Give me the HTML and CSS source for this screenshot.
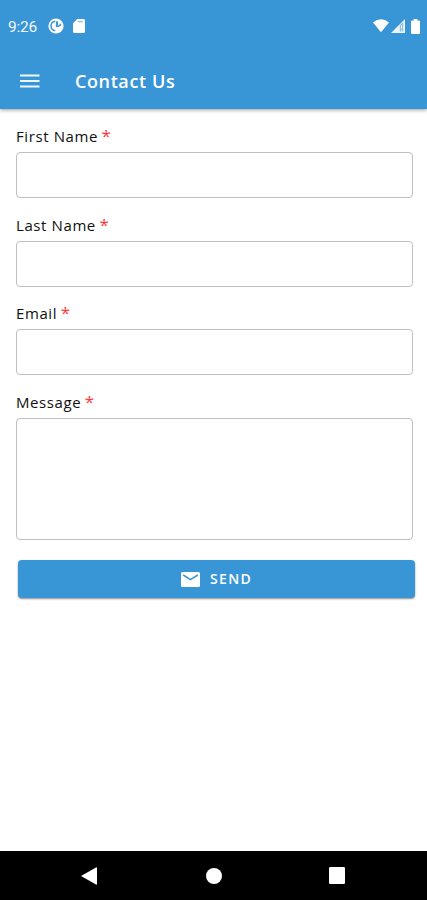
FILE: index.html
```html
<!DOCTYPE html>
<html lang="en">
<head>
<meta charset="utf-8">
<title>Contact Us</title>
<link rel="stylesheet" href="styles.css">
</head>
<body>
<div class="screen">
  <header class="header">
    <div class="status">
      <span class="clock">9:26</span>
      <svg class="app-icon" width="16" height="16" viewBox="0 0 16 16"><circle cx="8" cy="8" r="7.6" fill="#fff"/><path d="M7.2 3.4H6.4Q3 4.6 3 8T6.4 12.6H7.2M8.6 3.4V8.2H10.2Q12.6 8 12.6 5.8" fill="none" stroke="#3895d6" stroke-width="1.5"/><path d="M8.6 3.6H10V7.2H8.6z" fill="#3895d6"/></svg>
      <svg class="card-icon" width="12" height="14" viewBox="0 0 12 14"><path d="M4.2 0H10.5Q12 0 12 1.5V12.5Q12 14 10.5 14H1.5Q0 14 0 12.5V4.2z" fill="#fff"/><path d="M4.8 2.6h5" stroke="#3895d6" stroke-opacity=".6" stroke-width="1.4"/></svg>
      <div class="signals">
        <svg width="16" height="14" viewBox="0 0 16 14"><path d="M8 13.3L0 3.5Q8-3 16 3.5z" fill="#fff"/></svg>
        <svg class="cell" width="14" height="14" viewBox="0 0 14 14"><path d="M14 0V14H0z" fill="#fff" fill-opacity=".9"/><path d="M8.8 6.3L12.2 3V12.4H8.8z" fill="#3895d6" fill-opacity=".55"/><path d="M10.5 6v3.8M10.5 11v1.4" stroke="#fff" stroke-width="1"/></svg>
        <svg class="battery" width="9" height="15" viewBox="0 0 9 15"><path d="M2.7 0h3.6v1.4H8q1 0 1 1V14q0 1-1 1H1q-1 0-1-1V2.4q0-1 1-1h1.7z" fill="#fff"/></svg>
      </div>
    </div>
    <div class="toolbar">
      <svg class="menu" width="20" height="14" viewBox="0 0 20 14"><path d="M0 1.5h19.5M0 7h19.5M0 12.5h19.5" stroke="#fff" stroke-width="2" stroke-opacity=".92"/></svg>
      <h1 class="title">Contact Us</h1>
    </div>
  </header>
  <form class="form">
    <label class="field"><span class="label">First Name <b class="req">*</b></span><input class="box" type="text"></label>
    <label class="field"><span class="label">Last Name <b class="req">*</b></span><input class="box" type="text"></label>
    <label class="field"><span class="label">Email <b class="req">*</b></span><input class="box" type="text"></label>
    <label class="field"><span class="label">Message <b class="req">*</b></span><textarea class="box tall"></textarea></label>
    <button class="send" type="button">
      <svg width="19" height="15" viewBox="0 0 19 15"><rect width="19" height="15" rx="1.6" fill="#fff"/><path d="M2.2 3L9.5 7.6L16.8 3" fill="none" stroke="#3895d6" stroke-width="1.6"/></svg>
      <span>SEND</span>
    </button>
  </form>
  <nav class="nav">
    <svg class="back" width="16" height="18" viewBox="0 0 16 18"><path d="M0 9L15 .5Q16 0 16 1V17Q16 18 15 17.5z" fill="#fff"/></svg>
    <svg class="home" width="16" height="16" viewBox="0 0 16 16"><circle cx="8" cy="8" r="8" fill="#fff"/></svg>
    <svg class="recent" width="16" height="17" viewBox="0 0 16 17"><rect width="16" height="17" rx="1.2" fill="#fff"/></svg>
  </nav>
</div>
</body>
</html>
```
FILE: styles.css
```css
* { box-sizing: border-box; }
body { margin: 0; background: #fff; font-family: "Open Sans", "Noto Sans", sans-serif; }
svg { display: block; flex: none; }
.screen { width: 427px; height: 900px; display: flex; flex-direction: column; overflow: hidden; }
.header { height: 109px; flex: none; background: #3895d6; color: #fff; box-shadow: 0 1px 4px rgba(0, 0, 0, .4); }
.status { height: 52px; padding: 0 7px 0 8px; display: flex; align-items: center; }
.clock { width: 40px; font: 400 15.5px/20px Roboto, sans-serif; padding-top: 1px; letter-spacing: -.2px; opacity: .93; }
.card-icon { margin-left: 9px; }
.signals { margin-left: auto; display: flex; align-items: center; }
.cell { margin-left: 2px; }
.battery { margin-left: 6px; }
.toolbar { height: 57px; padding-left: 20px; display: flex; align-items: center; }
.title { margin: 0 0 0 35px; font-size: 18px; line-height: 24px; font-weight: 600; letter-spacing: .6px; }
.form { flex: 1; padding: 16px 12px 0 16px; display: flex; flex-direction: column; }
.field { display: flex; flex-direction: column; width: 397px; margin-bottom: 15.5px; }
.label { height: 27px; font-size: 15px; line-height: 22px; font-weight: 500; letter-spacing: .6px; color: #111; }
.req { font-weight: 400; font-size: 17px; line-height: 20px; margin-left: -1px; color: #ff3838; }
.box { display: block; width: 100%; height: 46px; margin: 0; padding: 8px; border: 1.5px solid #bfbfbf; border-radius: 4px; background: #fff; outline: none; resize: none; font: inherit; }
.tall { height: 122px; }
.send { width: 397px; height: 38px; margin: 5px 0 0 2px; padding: 0; border: 0; border-radius: 4px; background: #3895d6; color: #fff; display: flex; align-items: center; justify-content: center; gap: 10px; font: 600 14px/20px "Open Sans", sans-serif; letter-spacing: 1.3px; box-shadow: 0 1px 2px rgba(0, 0, 0, .45); }
.nav { height: 49px; flex: none; background: #000; display: flex; align-items: center; padding-left: 81px; }
.home { margin-left: 109px; }
.recent { margin-left: 107px; }
```
